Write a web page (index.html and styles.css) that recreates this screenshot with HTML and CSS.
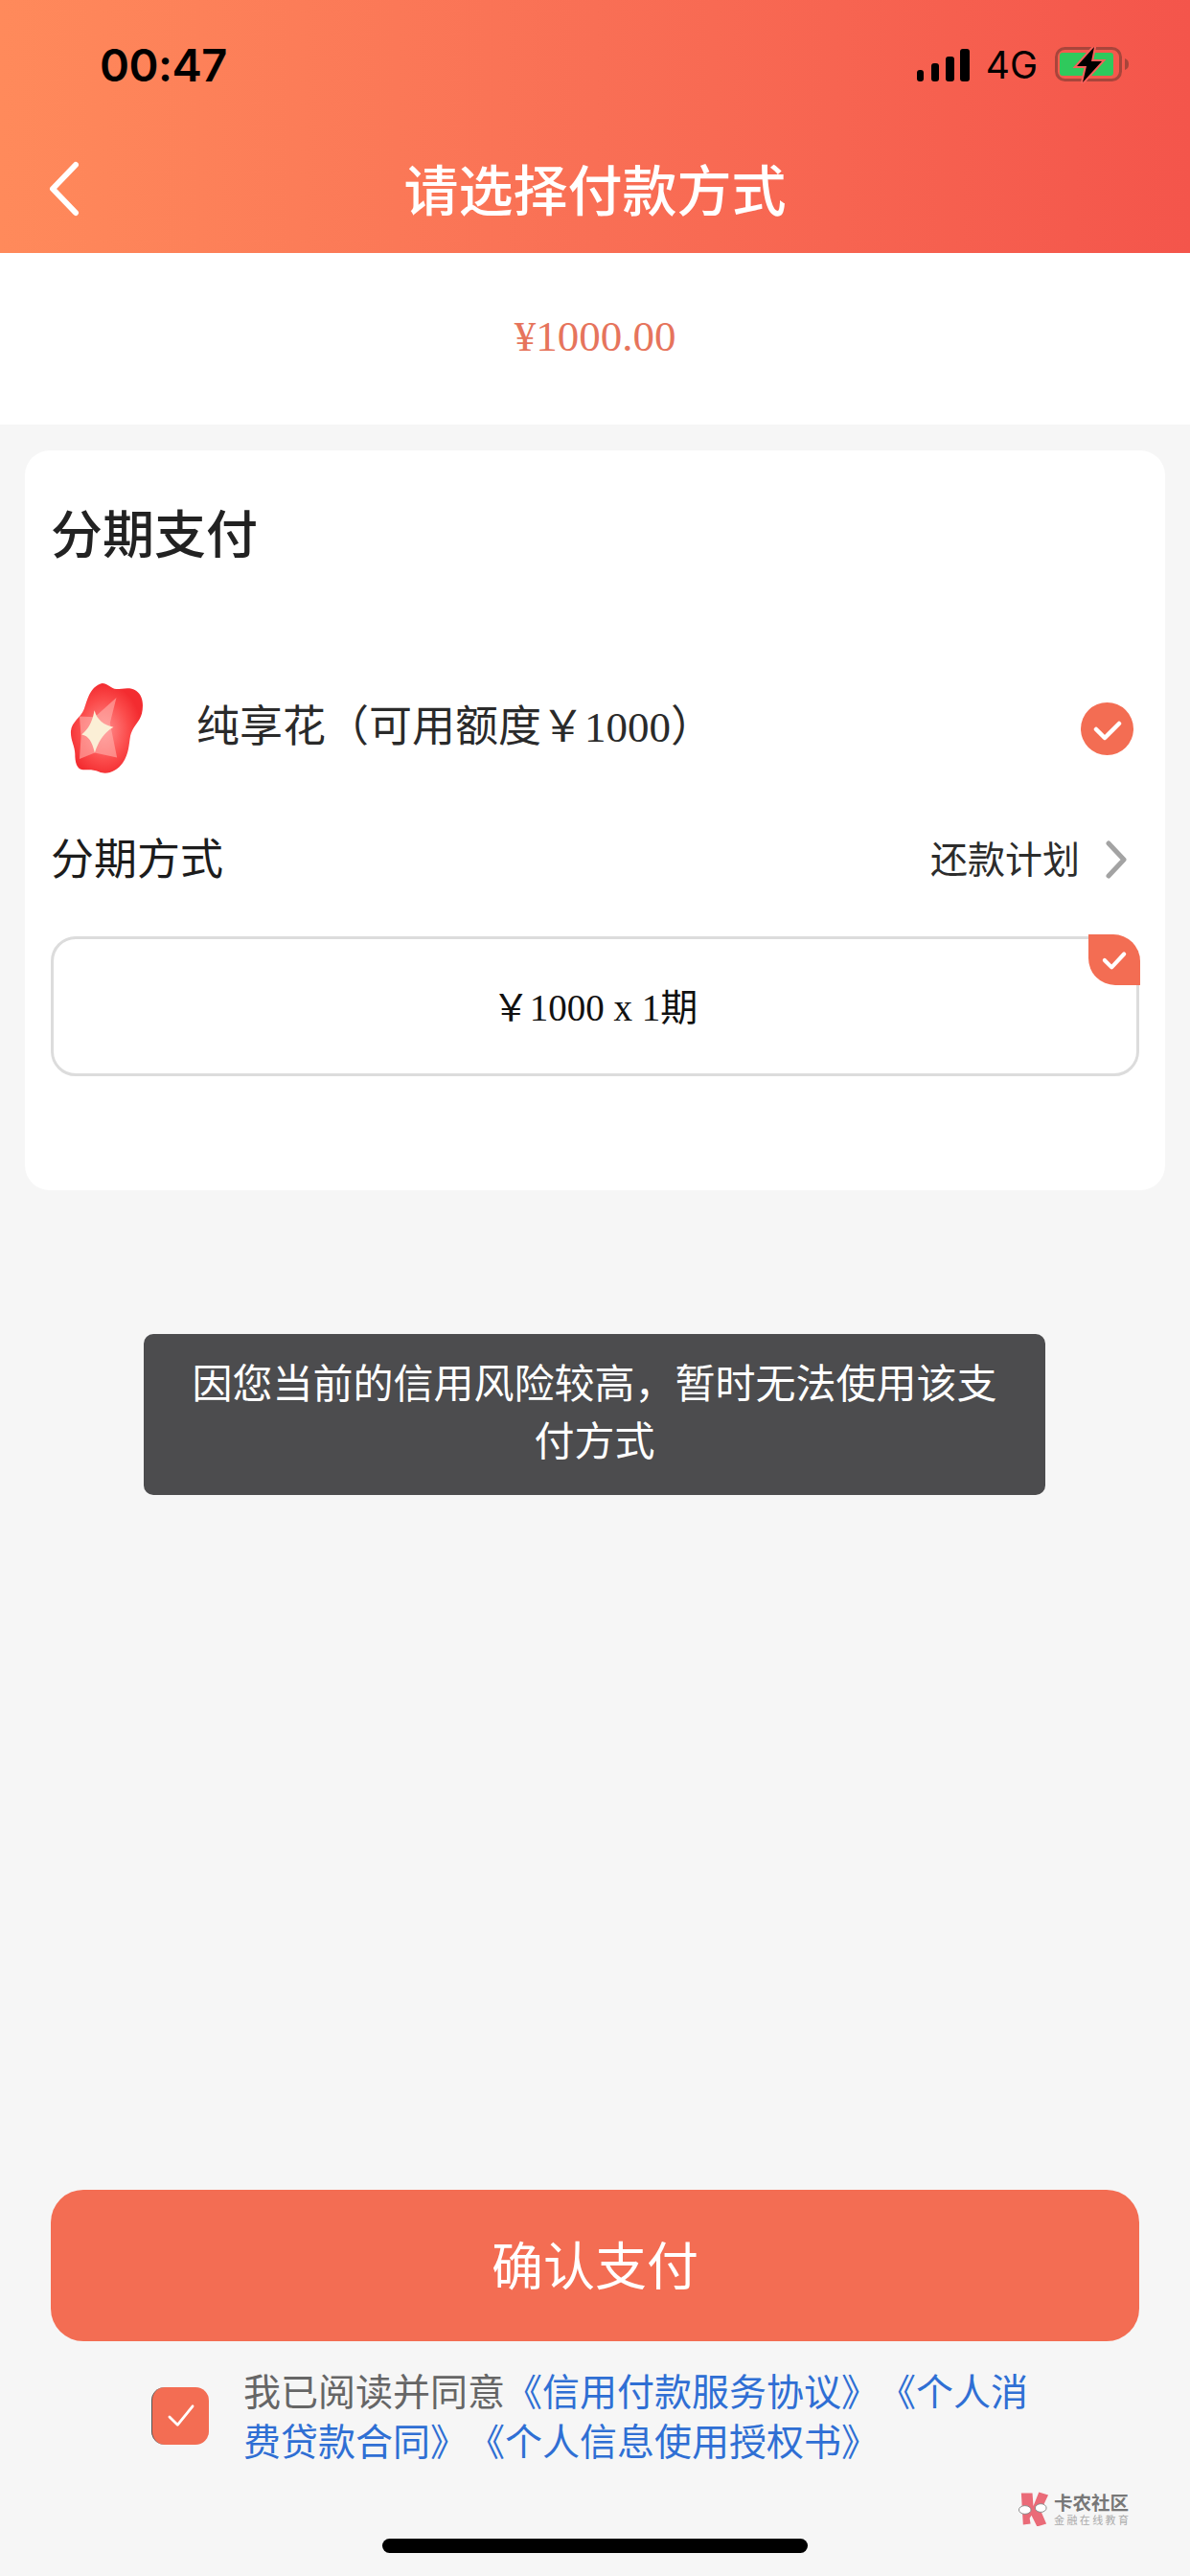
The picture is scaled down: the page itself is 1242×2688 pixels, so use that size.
FILE: index.html
```html
<!DOCTYPE html>
<html lang="zh-CN">
<head>
<meta charset="utf-8">
<title>请选择付款方式</title>
<link rel="stylesheet" href="styles.css">
</head>
<body>
<div class="page">
  <header class="header">
    <div class="status">
      <span class="time">00:47</span>
      <div class="status-right">
        <svg class="signal" viewBox="0 0 55 34"><rect x="0" y="22" width="7" height="12" rx="3"/><rect x="15" y="15" width="8" height="19" rx="3"/><rect x="30" y="8" width="9" height="26" rx="3"/><rect x="45" y="0" width="10" height="34" rx="3"/></svg>
        <span class="net">4G</span>
        <svg class="battery" viewBox="0 0 80 38"><rect x="1.5" y="1.5" width="67" height="33" rx="9" fill="none" stroke="#a8453b" stroke-width="3"/><rect x="5" y="6" width="56" height="24" rx="3" fill="#2fc95c"/><path d="M73 12c3 1 4 3 4 6s-1 5-4 6z" fill="#a8453b"/><path d="M41 0L23 20h10l-4 17 20-22H38z" fill="#000" stroke="#f8605a" stroke-width="4" paint-order="stroke"/></svg>
      </div>
    </div>
    <nav class="nav">
      <svg class="back" viewBox="0 0 34 58"><path d="M29 4L5 29l24 25" fill="none" stroke="#fff" stroke-width="6" stroke-linecap="round" stroke-linejoin="round"/></svg>
      <h1 class="title">请选择付款方式</h1>
      <span class="nav-spacer"></span>
    </nav>
  </header>

  <div class="amount">¥1000.00</div>

  <section class="card">
    <h2 class="card-title">分期支付</h2>
    <div class="pay-row">
      <svg class="pay-icon" viewBox="120 85 250 310">
        <defs><radialGradient id="blob" cx="46%" cy="52%" r="52%"><stop offset="0" stop-color="#ff8f8f"/><stop offset="0.65" stop-color="#fb4b4b"/><stop offset="1" stop-color="#f32c30"/></radialGradient></defs>
        <path d="M230 97c20 0 28 18 45 18 20 0 42-8 62 5 22 15 24 45 18 72-7 28-30 42-36 70-5 28-4 56-24 85-18 26-50 40-75 28-20-9-35-6-50-6-20-2-25-25-25-50 0-24-15-45-13-72 3-30 30-40 42-70 10-28 18-70 56-80z" fill="url(#blob)"/>
        <path d="M275 142l-20 80 22 108-70-15-48 20 5-72-5-62 48 2z" fill="#ffb3ae" opacity="0.6"/>
        <path d="M206 182c8 30 30 46 60 53-26 14-46 40-59 80-8-34-20-54-41-57 22-18 34-42 40-76z" fill="#fbefd6"/>
      </svg>
      <span class="pay-name">纯享花（可用额度<span class="serif">￥1000</span>）</span>
      <svg class="pay-check" viewBox="0 0 55 55"><circle cx="27.5" cy="27.5" r="27.5" fill="#f36d53"/><path d="M16 28l9 9 15-15" fill="none" stroke="#fff" stroke-width="4.5" stroke-linecap="round" stroke-linejoin="round"/></svg>
    </div>
    <div class="method-row">
      <span class="method-label">分期方式</span>
      <span class="plan">还款计划</span>
      <svg class="plan-arrow" viewBox="0 0 24 40"><path d="M4 3l16 17L4 37" fill="none" stroke="#a3a3a3" stroke-width="5" stroke-linecap="round" stroke-linejoin="round"/></svg>
    </div>
    <div class="plan-box">
      <span class="plan-text">￥1000 x 1<span class="cjk">期</span></span>
      <span class="plan-badge">
        <svg class="badge-check" viewBox="0 0 30 26"><path d="M4 13l8 8L26 6" fill="none" stroke="#fff" stroke-width="4.5" stroke-linecap="round" stroke-linejoin="round"/></svg>
      </span>
    </div>
  </section>

  <div class="toast">因您当前的信用风险较高，暂时无法使用该支付方式</div>

  <div class="spacer"></div>

  <button class="confirm">确认支付</button>
  <div class="agree">
    <span class="checkbox">
      <svg class="checkbox-mark" viewBox="0 0 32 28"><path d="M3 15l9 9L29 3" fill="none" stroke="#fff" stroke-width="3" stroke-linecap="round" stroke-linejoin="round"/></svg>
    </span>
    <p class="agree-text">我已阅读并同意<a class="link">《信用付款服务协议》《个人消费贷款合同》《个人信息使用授权书》</a></p>
  </div>
  <div class="home-bar"></div>

  <div class="watermark">
    <svg class="wm-logo" viewBox="0 0 34 36">
      <path d="M4 1h12l1 14 6-15 10 3-8 17 6 14-10 3-6-12-2 3 1 6-8 1z" fill="#ea6b78"/>
      <ellipse cx="8" cy="19" rx="6.5" ry="4.5" fill="#fff" stroke="#888" stroke-width="1"/>
      <ellipse cx="25" cy="17" rx="6" ry="4.5" fill="#fff" stroke="#888" stroke-width="1"/>
    </svg>
    <div class="wm-text">
      <span class="wm-name">卡农社区</span>
      <span class="wm-sub">金融在线教育</span>
    </div>
  </div>
</div>
</body>
</html>
```
FILE: styles.css
```css
* { box-sizing: border-box; }
html, body { margin: 0; padding: 0; }
body { background: #f6f6f6; font-family: "Noto Sans CJK SC", "Noto Sans", sans-serif; text-spacing-trim: space-all; }
.page { position: relative; width: 1242px; height: 2688px; display: flex; flex-direction: column; overflow: hidden; }

.header { height: 264px; background: linear-gradient(90deg, #ff8a5b 0%, #f96f55 50%, #f4554b 100%); }
.status { height: 134px; display: flex; justify-content: space-between; align-items: center; padding: 0 61px 0 104px; }
.time { font-family: Inter, "Liberation Sans", sans-serif; font-weight: 600; font-size: 47px; color: #000; letter-spacing: -0.5px; }
.status-right { display: flex; align-items: center; }
.signal { width: 55px; height: 34px; fill: #000; margin-top: 2px; }
.net { font-family: Inter, "Liberation Sans", sans-serif; font-size: 39px; color: #000; margin-left: 17px; margin-right: 18px; }
.battery { width: 80px; height: 38px; margin-top: 2px; }

.nav { height: 130px; display: flex; align-items: center; padding: 0 0 4px 50px; }
.back { width: 34px; height: 58px; flex: none; }
.title { flex: 1; margin: 0; font-size: 57px; font-weight: 500; color: #fff; line-height: 70px; text-align: center; padding-bottom: 4px; }
.nav-spacer { width: 84px; flex: none; }

.amount { height: 179px; background: #fff; display: flex; align-items: center; justify-content: center; padding-bottom: 6px; font-family: "Liberation Serif", serif; font-size: 45px; color: #e6745c; }

.card { width: 1190px; margin: 27px 0 0 26px; padding: 50px 27px 119px; background: #fff; border-radius: 26px; }
.card-title { margin: 0; font-size: 54px; line-height: 70px; font-weight: 500; color: #222; }
.pay-row { display: flex; align-items: center; margin-top: 118px; height: 104px; padding: 0 6px 0 17px; }
.pay-icon { width: 83px; height: 103px; flex: none; }
.pay-name { margin-left: 52px; font-size: 45px; line-height: 60px; color: #2a2a2a; flex: 1; margin-bottom: 6px; }
.serif { font-family: "Liberation Serif", "Noto Sans CJK SC", serif; font-size: 45px; }
.pay-check { width: 55px; height: 55px; flex: none; }

.method-row { display: flex; align-items: center; height: 60px; margin-top: 54px; padding-right: 12px; }
.method-label { font-size: 45px; line-height: 60px; color: #1c1c1c; flex: 1; padding-bottom: 5px; }
.plan { font-size: 39px; line-height: 60px; color: #2c2c2c; padding-bottom: 4px; }
.plan-arrow { width: 24px; height: 40px; margin: 2px 0 0 26px; }

.plan-box { position: relative; height: 146px; margin-top: 51px; border: 3px solid #dcdcdc; border-radius: 26px; display: flex; align-items: center; justify-content: center; padding-bottom: 4px; }
.plan-text { font-family: "Liberation Serif", "Noto Sans CJK SC", serif; font-size: 39px; color: #111; }
.cjk { font-family: "Noto Sans CJK SC", sans-serif; }
.plan-badge { position: absolute; top: -5px; right: -4px; width: 54px; height: 53px; background: #f36d53; border-radius: 0 28px 0 28px; display: flex; align-items: center; justify-content: center; }
.badge-check { width: 28px; height: 24px; }

.toast { align-self: flex-start; margin: 150px 0 0 150px; width: 941px; height: 168px; padding: 19px 50px 0; background: #4c4c4e; border-radius: 10px; color: #fff; font-size: 42px; line-height: 60px; text-align: center; }

.spacer { flex: 1; }

.confirm { display: flex; align-items: center; justify-content: center; width: 1136px; height: 158px; margin-left: 53px; padding: 0 0 6px; border: 0; border-radius: 34px; background: #f36d53; color: #fff; font-family: inherit; font-size: 54px; }

.agree { display: flex; align-items: center; margin-top: 24px; padding-left: 158px; }
.checkbox { display: flex; align-items: center; justify-content: center; width: 60px; height: 60px; border-radius: 14px; background: #f36d53; border-left: 1px solid #555; flex: none; }
.checkbox-mark { width: 30px; height: 26px; }
.agree-text { margin: 0 0 0 36px; width: 826px; padding-bottom: 4px; font-size: 39px; line-height: 52px; color: #666; }
.link { color: #2f6fd4; }

.home-bar { width: 444px; height: 15px; margin: 74px 0 24px 399px; border-radius: 8px; background: #000; }

.watermark { position: absolute; left: 1062px; top: 2600px; display: flex; align-items: center; gap: 5px; }
.wm-logo { width: 33px; height: 36px; }
.wm-text { display: flex; flex-direction: column; }
.wm-name { font-size: 19.5px; line-height: 22px; font-weight: 700; color: #777; white-space: nowrap; }
.wm-sub { font-size: 11px; line-height: 14px; letter-spacing: 2.4px; color: #aaa; white-space: nowrap; }
```
